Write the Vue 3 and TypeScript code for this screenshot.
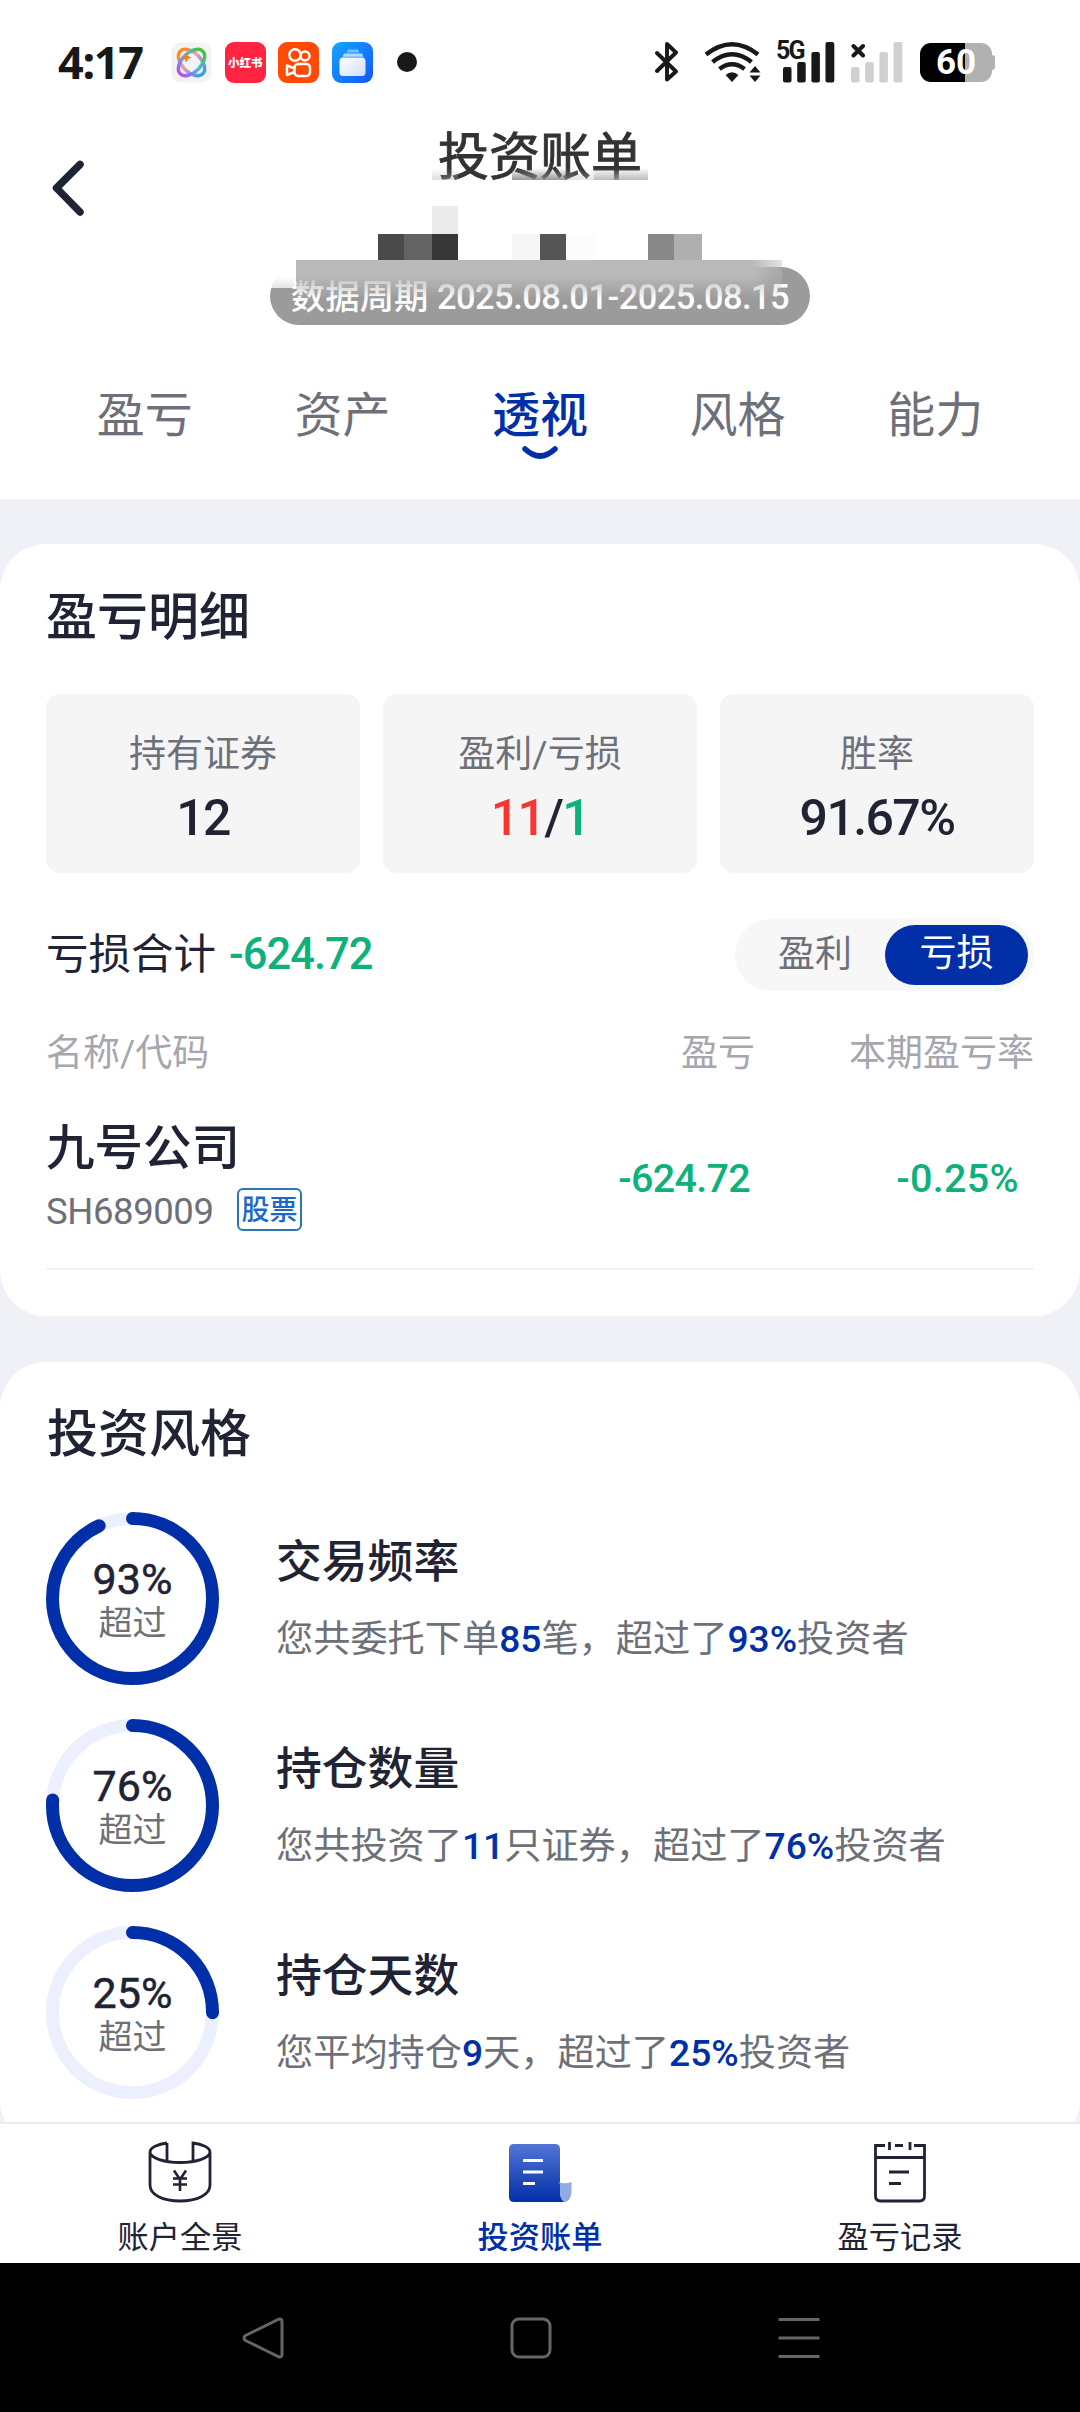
<script setup lang="ts">
interface Stat { label: string; parts: { text: string; tone: string }[] }
interface Metric { title: string; percent: number; segments: { text: string; strong?: boolean }[] }

const tabs = ['盈亏', '资产', '透视', '风格', '能力']
const activeTab = '透视'

const stats: Stat[] = [
  { label: '持有证券', parts: [{ text: '12', tone: 'ink' }] },
  { label: '盈利/亏损', parts: [{ text: '11', tone: 'up' }, { text: '/', tone: 'ink' }, { text: '1', tone: 'down' }] },
  { label: '胜率', parts: [{ text: '91.67%', tone: 'ink' }] },
]

const metrics: Metric[] = [
  {
    title: '交易频率', percent: 93,
    segments: [{ text: '您共委托下单' }, { text: '85', strong: true }, { text: '笔，超过了' }, { text: '93%', strong: true }, { text: '投资者' }],
  },
  {
    title: '持仓数量', percent: 76,
    segments: [{ text: '您共投资了' }, { text: '11', strong: true }, { text: '只证券，超过了' }, { text: '76%', strong: true }, { text: '投资者' }],
  },
  {
    title: '持仓天数', percent: 25,
    segments: [{ text: '您平均持仓' }, { text: '9', strong: true }, { text: '天，超过了' }, { text: '25%', strong: true }, { text: '投资者' }],
  },
]

const ringLength = 2 * Math.PI * 80
const dash = (percent: number): string => `${(ringLength * percent) / 100} ${ringLength}`
</script>

<template>
  <div class="page">
    <header class="top">
      <div class="status">
        <span class="clock">4:17</span>
        <div class="apps">
          <svg width="41" height="41" viewBox="0 0 41 41">
            <defs>
              <linearGradient id="loopA" x1="0" y1="0" x2="1" y2="0">
                <stop offset="0" stop-color="#ff8a1e" /><stop offset=".45" stop-color="#e59ac0" /><stop offset="1" stop-color="#2f9df5" />
              </linearGradient>
              <linearGradient id="loopB" x1="1" y1="0" x2="0" y2="0">
                <stop offset="0" stop-color="#46c23a" /><stop offset=".5" stop-color="#4fb7f0" /><stop offset="1" stop-color="#b452ea" />
              </linearGradient>
            </defs>
            <rect x=".5" y=".5" width="40" height="40" rx="9" fill="#f3f3f3" />
            <ellipse cx="20.5" cy="20.5" rx="16" ry="9.5" transform="rotate(45 20.5 20.5)" fill="none" stroke="url(#loopA)" stroke-width="3.4" />
            <ellipse cx="20.5" cy="20.5" rx="16" ry="9.5" transform="rotate(-45 20.5 20.5)" fill="none" stroke="url(#loopB)" stroke-width="3.4" />
            <path d="M15 10l1.6 3.8 3.8 1.6-3.8 1.6L15 20.800l-1.600-3.800-3.800-1.600 3.800-1.600z" fill="#ff7a1c" />
          </svg>
          <span class="red-app">小红书</span>
          <svg width="41" height="41" viewBox="0 0 41 41">
            <rect width="41" height="41" rx="9" fill="#ff4906" />
            <g fill="none" stroke="#fff" stroke-width="2.500" stroke-linejoin="round">
              <circle cx="17" cy="13" r="5.700" /><circle cx="27" cy="14" r="4.500" />
              <rect x="16.500" y="22" width="15.500" height="12" rx="3.500" />
              <path d="M16.500 26.500L9 23.500v9.500l7.500-3" />
            </g>
          </svg>
          <svg width="41" height="41" viewBox="0 0 41 41">
            <defs>
              <linearGradient id="wallet" x1="0" y1="0" x2="1" y2="1"><stop offset="0" stop-color="#16a6fb" /><stop offset="1" stop-color="#1157fb" /></linearGradient>
              <linearGradient id="sheet" x1="0" y1="0" x2="1" y2="1"><stop offset="0" stop-color="#fff" /><stop offset="1" stop-color="#cfdffc" /></linearGradient>
            </defs>
            <rect width="41" height="41" rx="9" fill="url(#wallet)" />
            <path d="M16 7.500h10l1.500 3h-13z" fill="#74c3fd" /><path d="M12 11.500h18l1.500 3.300h-21z" fill="#b1dbfe" />
            <rect x="7.500" y="15.500" width="26" height="18.500" rx="3.500" fill="url(#sheet)" />
          </svg>
        </div>
        <i class="dot"></i>
        <div class="signals">
          <svg width="24" height="42" viewBox="0 0 24 42">
            <path d="M2 12L21 30.500 12 38.500V3L21 11.500 2 30" fill="none" stroke="#181818" stroke-width="3.900" stroke-linejoin="round" stroke-linecap="round" />
          </svg>
          <svg class="wifi" width="57" height="42" viewBox="0 0 57 42">
            <g fill="none" stroke="#181818" stroke-width="4.600">
              <path d="M2 13.500Q28 -7 54 13.500" /><path d="M8.500 21Q28 5.500 47.500 21" /><path d="M15.500 28Q28 18.500 40.500 28" />
            </g>
            <path d="M21.500 34q6.500-5.500 13 0L28 41z" fill="#181818" />
            <path d="M45.500 31.500h11L51 25zM45.500 34.500h11L51 41z" fill="#181818" />
          </svg>
          <div class="cell">
            <b>5G</b>
            <svg width="52" height="42" viewBox="0 0 52 42" fill="#181818">
              <rect y="26" width="8.500" height="15.500" rx="2" /><rect x="14.200" y="21" width="8.500" height="20.500" rx="2" />
              <rect x="28.400" y="11" width="8.500" height="30.500" rx="2" /><rect x="42.500" y="1" width="8.800" height="40.500" rx="2" />
            </svg>
          </div>
          <svg class="nosim" width="52" height="42" viewBox="0 0 52 42">
            <g fill="#d0d0d0">
              <rect y="26" width="8.500" height="15.500" rx="2" /><rect x="14.200" y="21" width="8.500" height="20.500" rx="2" />
              <rect x="28.400" y="11" width="8.500" height="30.500" rx="2" /><rect x="42.500" y="1" width="8.800" height="40.500" rx="2" />
            </g>
            <path d="M2.500 5L12 14.500M12 5L2.500 14.500" stroke="#181818" stroke-width="4" stroke-linecap="round" />
          </svg>
          <div class="battery"><span>60</span></div>
        </div>
      </div>

      <div class="heading">
        <svg class="back" width="40" height="60" viewBox="0 0 40 60">
          <path d="M32 6.500L8.500 30 32 54" fill="none" stroke="#1d2532" stroke-width="7.500" stroke-linecap="round" stroke-linejoin="round" />
        </svg>
        <div class="center">
          <h1>投资账单</h1>
          <i class="smear s1"></i><i class="smear s2"></i><i class="smear s3"></i><i class="smear s4"></i>
          <svg class="mosaic" width="324" height="54" viewBox="0 0 324 54" shape-rendering="crispEdges">
            <rect x="54" width="26" height="28" fill="#ebebeb" />
            <rect y="28" width="26" height="26" fill="#4a4a4a" /><rect x="26" y="28" width="28" height="26" fill="#636363" />
            <rect x="54" y="28" width="26" height="26" fill="#373737" /><rect x="134" y="28" width="28" height="26" fill="#f6f6f6" />
            <rect x="162" y="28" width="26" height="26" fill="#555" /><rect x="188" y="28" width="28" height="26" fill="#fcfcfc" />
            <rect x="270" y="28" width="26" height="26" fill="#888" /><rect x="296" y="28" width="28" height="26" fill="#afafaf" />
          </svg>
          <div class="period">
            数据周期 <span>2025.08.01-2025.08.15</span>
            <i class="fade-left"></i><i class="fade"></i>
          </div>
        </div>
      </div>

      <nav class="tabs">
        <div v-for="tab in tabs" :key="tab" class="tab" :class="{ on: tab === activeTab }">
          <span>{{ tab }}</span>
          <svg v-if="tab === activeTab" width="36" height="16" viewBox="0 0 36 16">
            <path d="M3 4Q18 18 33 4" fill="none" stroke="#002fa7" stroke-width="5.500" stroke-linecap="round" />
          </svg>
        </div>
      </nav>
    </header>

    <main class="scroll">
      <section class="card">
        <h2>盈亏明细</h2>
        <div class="stats">
          <div v-for="s in stats" :key="s.label" class="stat">
            <span class="label">{{ s.label }}</span>
            <span class="value"><span v-for="(p, i) in s.parts" :key="i" :class="p.tone">{{ p.text }}</span></span>
          </div>
        </div>
        <div class="summary">
          <div class="total"><span>亏损合计</span><span class="down">-624.72</span></div>
          <div class="toggle"><span>盈利</span><span class="on">亏损</span></div>
        </div>
        <div class="thead"><span class="c1">名称/代码</span><span class="c2">盈亏</span><span class="c3">本期盈亏率</span></div>
        <div class="row">
          <div class="c1">
            <div class="name">九号公司</div>
            <div class="code"><span>SH689009</span><em>股票</em></div>
          </div>
          <div class="c2 down">-624.72</div>
          <div class="c3 down">-0.25%</div>
        </div>
      </section>

      <section class="card style">
        <h2>投资风格</h2>
        <div v-for="m in metrics" :key="m.title" class="metric">
          <div class="ring">
            <svg width="173" height="173" viewBox="0 0 173 173">
              <g fill="none" stroke-width="13" transform="rotate(-90 86.500 86.500)">
                <circle cx="86.500" cy="86.500" r="80" stroke="#ebeffe" />
                <circle cx="86.500" cy="86.500" r="80" stroke="#002fa7" stroke-linecap="round" :stroke-dasharray="dash(m.percent)" />
              </g>
            </svg>
            <div class="ring-text"><b>{{ m.percent }}%</b><span>超过</span></div>
          </div>
          <div class="detail">
            <h3>{{ m.title }}</h3>
            <p><span v-for="(s, i) in m.segments" :key="i" :class="{ strong: s.strong }">{{ s.text }}</span></p>
          </div>
        </div>
      </section>
    </main>

    <footer class="tabbar">
      <div class="item">
        <svg width="64" height="64" viewBox="0 0 64 64" fill="none" stroke="#1f2333" stroke-width="2.800">
          <path d="M19 3C10 4 2 7.500 2 12v33c0 10 13 16 30 16s30-6 30-16V12c0-4.500-8-8-17-9v18M19 3v18M2 12c0 5.500 13 10.500 30 10.500S62 17.500 62 12" />
          <path d="M26 30.500l6 9 6-9M32 39.500V51M25 38.500h14M25 44.500h14" stroke-width="2.600" />
        </svg>
        <span>账户全景</span>
      </div>
      <div class="item on">
        <svg width="64" height="64" viewBox="0 0 64 64">
          <defs><linearGradient id="bill" x1="0" y1="0" x2="0" y2="1"><stop offset="0" stop-color="#5475d6" /><stop offset="1" stop-color="#002fa7" /></linearGradient></defs>
          <path d="M6 4h41q5 0 5 5v42q0 9 6 11H6q-5 0-5-5V9q0-5 5-5z" fill="url(#bill)" />
          <path d="M50 42q7 2.500 13.500 0v9q0 10-7 11-4.500-2-4.500-10V44z" fill="#93a9e2" />
          <path d="M15 20.500h20M15 32h20M15 43.500h12" stroke="#fff" stroke-width="3" />
        </svg>
        <span>投资账单</span>
      </div>
      <div class="item">
        <svg width="64" height="64" viewBox="0 0 64 64" fill="none" stroke="#1f2333" stroke-width="2.800">
          <path d="M17 5.500H7.500V56q0 5 5 5h39q5 0 5-5V5.500H46M27 5.500h8M21.500 2v8M42 2v8M7 17.500h50M21 32h20M21 43.500h12" />
        </svg>
        <span>盈亏记录</span>
      </div>
    </footer>

    <div class="sysnav">
      <svg width="44" height="44" viewBox="0 0 44 44"><path d="M37 3.500L4.500 19.500q-3 2.500 0 5L37 40.500q4 1.500 4-2V5.500q0-3.500-4-2z" /></svg>
      <svg width="44" height="44" viewBox="0 0 44 44"><rect x="3" y="3" width="38" height="38" rx="7" /></svg>
      <svg width="44" height="44" viewBox="0 0 44 44"><path d="M1.500 3.500h41M1.500 22h41M1.500 40.500h41" /></svg>
    </div>
  </div>
</template>

<style>
html, body { margin: 0; background: #fff; }
</style>

<style scoped>
.page { width: 1080px; height: 2412px; overflow: hidden; display: flex; flex-direction: column; background: #f0f1f6; color: #1f2333; font-family: Roboto, "Noto Sans CJK SC", sans-serif; font-size: 37px; white-space: nowrap; }
h1, h2, h3, p { margin: 0; font-weight: 500; }
i, em { font-style: normal; display: block; }
svg { display: block; flex: none; }
.ink { color: #1f2333; }
.up { color: #f8352f; }
.down { color: #0eb07b; }

.top { height: 499px; flex: none; background: #fff; }
.status { height: 124px; display: flex; align-items: center; padding-left: 58px; }
.clock { width: 113px; font: 700 45px/60px "Noto Sans", Roboto, sans-serif; letter-spacing: -1.300px; color: #181818; }
.apps { display: flex; gap: 12.700px; }
.red-app { width: 41px; height: 41px; border-radius: 9px; background: #ff2442; color: #fff; font-weight: 900; font-size: 11.500px; line-height: 42px; text-align: center; }
.dot { width: 20px; height: 20px; border-radius: 50%; background: #181818; margin-left: 24px; }
.signals { display: flex; align-items: center; margin-left: 238px; }
.wifi { margin-left: 25px; }
.cell { position: relative; margin-left: 22px; }
.cell b { position: absolute; left: -7px; top: -2px; font: 700 25px/24px Roboto, sans-serif; letter-spacing: -2px; color: #181818; }
.nosim { margin-left: 16px; }
.battery { position: relative; width: 72px; height: 39px; margin-left: 17px; border-radius: 11px; background: linear-gradient(90deg, #000 45px, #b1b1b1 45px); color: #fff; text-align: center; font: 700 35px/39px Roboto, sans-serif; }
.battery::after { content: ""; position: absolute; left: 72px; top: 12px; width: 3px; height: 15px; border-radius: 0 3px 3px 0; background: #b1b1b1; }

.heading { display: grid; grid-template-columns: 130px 1fr 130px; height: 201px; }
.back { margin: 34px 0 0 48px; }
.center { position: relative; display: flex; flex-direction: column; align-items: center; }
h1 { font-size: 51px; line-height: 68px; color: #333; font-weight: 400; -webkit-text-stroke: .9px #333; }
.smear { position: absolute; top: 44px; height: 12px; }
.s1 { left: 302px; width: 26px; background: linear-gradient(#aaa0, #aaa6); }
.s2 { left: 382px; width: 54px; background: linear-gradient(#8880, #888d); }
.s3 { left: 436px; width: 28px; background: linear-gradient(#bbb0, #bbb6); }
.s4 { left: 464px; width: 54px; background: linear-gradient(#aaa0, #aaac); }
.mosaic { margin-top: 14px; }
.period { position: relative; width: 540px; height: 58px; margin-top: 7px; border-radius: 29px; background: #9b9b9b; color: #fff; font-size: 34.400px; line-height: 60px; text-align: center; font-weight: 500; }
.period span { letter-spacing: -.5px; }
.fade { position: absolute; left: 26px; top: -7px; width: 486px; height: 40px; background: linear-gradient(#bababa 35%, #bababa00); -webkit-mask: linear-gradient(90deg, #000 94%, #0006); mask: linear-gradient(90deg, #000 94%, #0006); }
.fade-left { position: absolute; left: 0; top: -2px; width: 26px; height: 23px; background: linear-gradient(#fff 50%, #fffb); }

.tabs { display: flex; padding: 0 46px; height: 174px; }
.tab { flex: 1; display: flex; flex-direction: column; align-items: center; padding-top: 57px; font-size: 48px; line-height: 68px; color: #6e7079; }
.tab.on { color: #002fa7; font-weight: 500; }
.tab svg { margin-top: -5px; }

.scroll { flex: 1; min-height: 0; overflow: hidden; padding-top: 45px; display: flex; flex-direction: column; gap: 46px; }
.card { flex: none; background: #fff; border-radius: 46px; padding: 0 46px 46px; }
h2 { font-size: 51px; line-height: 148px; }
.stats { display: flex; gap: 23px; margin-top: 2px; }
.stat { flex: 1; height: 141px; padding-top: 38px; border-radius: 14px; background: #f5f5f5; display: flex; flex-direction: column; align-items: center; gap: 15px; }
.label { line-height: 45px; color: #6e7079; }
.value { font-size: 50px; line-height: 52px; font-weight: 500; letter-spacing: -1.600px; }
.summary { display: flex; justify-content: space-between; align-items: center; margin-top: 46px; height: 72px; }
.total { display: flex; align-items: center; height: 72px; padding-bottom: 1px; font-size: 42.500px; line-height: 72px; }
.total .down { margin-left: 13px; font-size: 43.500px; font-weight: 500; letter-spacing: -1px; }
.toggle { display: flex; align-items: center; box-sizing: border-box; height: 72px; width: 299px; padding: 0 6px 1px 10px; border-radius: 36px; background: #f7f7f7; line-height: 58px; text-align: center; color: #6e7079; }
.toggle span { flex: 1; }
.toggle .on { flex: none; width: 143px; height: 60px; border-radius: 30px; background: #002fa7; color: #fff; }
.thead { display: flex; margin-top: 33px; height: 59px; line-height: 60px; color: #a6a7ae; }
.c1 { flex: 1; }
.c2 { width: 250px; text-align: right; }
.c3 { width: 279px; text-align: right; }
.row { display: flex; height: 185px; border-bottom: 2px solid #f3f3f5; }
.row .c1 { padding-top: 36px; }
.row .c2, .row .c3 { font-size: 39.500px; line-height: 192px; font-weight: 500; letter-spacing: -.7px; box-sizing: border-box; }
.row .c2 { padding-right: 5px; }
.row .c3 { padding-right: 15px; letter-spacing: .3px; }
.name { font-size: 48.500px; line-height: 60px; font-weight: 500; }
.code { display: flex; align-items: center; margin-top: 9px; height: 43px; color: #6e7079; }
.code span { font-size: 36.500px; letter-spacing: -.4px; padding-top: 4px; width: 191px; }
.code em { width: 61px; height: 39px; border: 2px solid #2c76b5; border-radius: 6px; font-size: 28px; line-height: 42px; text-align: center; color: #1a68cc; font-weight: 500; }

.style h2 { line-height: 146px; margin-bottom: 4px; padding-left: 1px; }
.metric { display: flex; height: 173px; margin-bottom: 34px; }
.metric:last-child { margin-bottom: 1px; }
.ring { position: relative; width: 173px; margin-right: 57px; }
.ring-text { position: absolute; inset: 0; display: flex; flex-direction: column; align-items: center; padding-top: 45px; }
.ring-text b { font-size: 43px; line-height: 45px; font-weight: 400; -webkit-text-stroke: .5px #1f2333; }
.ring-text span { font-size: 34px; line-height: 43px; color: #6e7079; }
.detail { padding-top: 21px; }
h3 { font-size: 45.800px; line-height: 60px; }
p { margin-top: 23px; font-size: 37.200px; line-height: 46px; font-weight: 400; color: #6e7079; }
.strong { color: #002fa7; font-weight: 500; }

.tabbar { flex: none; height: 139px; border-top: 2px solid #ebebed; background: #fff; display: flex; }
.item { flex: 1; display: flex; flex-direction: column; align-items: center; padding-top: 16px; font-size: 31.200px; line-height: 40px; gap: 14px; }
.item.on { color: #002fa7; font-weight: 500; }
.sysnav { flex: none; height: 149px; background: #000; display: flex; align-items: center; gap: 224px; padding-left: 241px; }
.sysnav svg { fill: none; stroke: #666; stroke-width: 3; stroke-linejoin: round; }
</style>
